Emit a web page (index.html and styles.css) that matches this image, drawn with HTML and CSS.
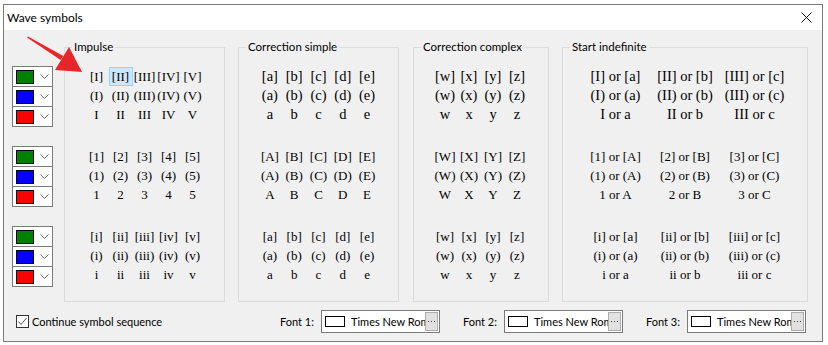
FILE: index.html
```html
<!DOCTYPE html>
<html lang="en">
<head>
    <meta charset="UTF-8">
    <title>Wave symbols</title>
    <link rel="stylesheet" href="styles.css">
</head>
<body>
    <div class="window">
        <div class="titlebar">
            <span class="title">Wave symbols</span>
            <svg class="close" width="11" height="11" viewBox="0 0 11 11">
                <path d="M0.5 0.5 L10.5 10.5 M10.5 0.5 L0.5 10.5" stroke="#111" stroke-width="1" fill="none"/>
            </svg>
        </div>

        <div class="dialog-body">
            <div class="main">
                <!-- colour pickers, one per symbol block -->
                <div class="pickers">
                    <div class="picker">
                        <div class="picker-row"><span class="swatch green"></span><svg class="chev" width="9" height="5" viewBox="0 0 9 5"><polyline points="0.5,0.5 4.5,4.5 8.5,0.5" fill="none" stroke="#6d6d6d"/></svg></div>
                        <div class="picker-row"><span class="swatch blue"></span><svg class="chev" width="9" height="5" viewBox="0 0 9 5"><polyline points="0.5,0.5 4.5,4.5 8.5,0.5" fill="none" stroke="#6d6d6d"/></svg></div>
                        <div class="picker-row"><span class="swatch red"></span><svg class="chev" width="9" height="5" viewBox="0 0 9 5"><polyline points="0.5,0.5 4.5,4.5 8.5,0.5" fill="none" stroke="#6d6d6d"/></svg></div>
                    </div>
                    <div class="picker">
                        <div class="picker-row"><span class="swatch green"></span><svg class="chev" width="9" height="5" viewBox="0 0 9 5"><polyline points="0.5,0.5 4.5,4.5 8.5,0.5" fill="none" stroke="#6d6d6d"/></svg></div>
                        <div class="picker-row"><span class="swatch blue"></span><svg class="chev" width="9" height="5" viewBox="0 0 9 5"><polyline points="0.5,0.5 4.5,4.5 8.5,0.5" fill="none" stroke="#6d6d6d"/></svg></div>
                        <div class="picker-row"><span class="swatch red"></span><svg class="chev" width="9" height="5" viewBox="0 0 9 5"><polyline points="0.5,0.5 4.5,4.5 8.5,0.5" fill="none" stroke="#6d6d6d"/></svg></div>
                    </div>
                    <div class="picker">
                        <div class="picker-row"><span class="swatch green"></span><svg class="chev" width="9" height="5" viewBox="0 0 9 5"><polyline points="0.5,0.5 4.5,4.5 8.5,0.5" fill="none" stroke="#6d6d6d"/></svg></div>
                        <div class="picker-row"><span class="swatch blue"></span><svg class="chev" width="9" height="5" viewBox="0 0 9 5"><polyline points="0.5,0.5 4.5,4.5 8.5,0.5" fill="none" stroke="#6d6d6d"/></svg></div>
                        <div class="picker-row"><span class="swatch red"></span><svg class="chev" width="9" height="5" viewBox="0 0 9 5"><polyline points="0.5,0.5 4.5,4.5 8.5,0.5" fill="none" stroke="#6d6d6d"/></svg></div>
                    </div>
                </div>

                <fieldset class="group group-impulse">
                    <legend>Impulse</legend>
                    <div class="sym-block">
                        <div class="sym-row"><span>[I]</span><span class="selected">[II]</span><span>[III]</span><span>[IV]</span><span>[V]</span></div>
                        <div class="sym-row"><span>(I)</span><span>(II)</span><span>(III)</span><span>(IV)</span><span>(V)</span></div>
                        <div class="sym-row"><span>I</span><span>II</span><span>III</span><span>IV</span><span>V</span></div>
                    </div>
                    <div class="sym-block">
                        <div class="sym-row"><span>[1]</span><span>[2]</span><span>[3]</span><span>[4]</span><span>[5]</span></div>
                        <div class="sym-row"><span>(1)</span><span>(2)</span><span>(3)</span><span>(4)</span><span>(5)</span></div>
                        <div class="sym-row"><span>1</span><span>2</span><span>3</span><span>4</span><span>5</span></div>
                    </div>
                    <div class="sym-block">
                        <div class="sym-row"><span>[i]</span><span>[ii]</span><span>[iii]</span><span>[iv]</span><span>[v]</span></div>
                        <div class="sym-row"><span>(i)</span><span>(ii)</span><span>(iii)</span><span>(iv)</span><span>(v)</span></div>
                        <div class="sym-row"><span>i</span><span>ii</span><span>iii</span><span>iv</span><span>v</span></div>
                    </div>
                </fieldset>

                <fieldset class="group group-simple">
                    <legend>Correction simple</legend>
                    <div class="sym-block big">
                        <div class="sym-row"><span>[a]</span><span>[b]</span><span>[c]</span><span>[d]</span><span>[e]</span></div>
                        <div class="sym-row"><span>(a)</span><span>(b)</span><span>(c)</span><span>(d)</span><span>(e)</span></div>
                        <div class="sym-row"><span>a</span><span>b</span><span>c</span><span>d</span><span>e</span></div>
                    </div>
                    <div class="sym-block">
                        <div class="sym-row"><span>[A]</span><span>[B]</span><span>[C]</span><span>[D]</span><span>[E]</span></div>
                        <div class="sym-row"><span>(A)</span><span>(B)</span><span>(C)</span><span>(D)</span><span>(E)</span></div>
                        <div class="sym-row"><span>A</span><span>B</span><span>C</span><span>D</span><span>E</span></div>
                    </div>
                    <div class="sym-block">
                        <div class="sym-row"><span>[a]</span><span>[b]</span><span>[c]</span><span>[d]</span><span>[e]</span></div>
                        <div class="sym-row"><span>(a)</span><span>(b)</span><span>(c)</span><span>(d)</span><span>(e)</span></div>
                        <div class="sym-row"><span>a</span><span>b</span><span>c</span><span>d</span><span>e</span></div>
                    </div>
                </fieldset>

                <fieldset class="group group-complex">
                    <legend>Correction complex</legend>
                    <div class="sym-block big">
                        <div class="sym-row"><span>[w]</span><span>[x]</span><span>[y]</span><span>[z]</span></div>
                        <div class="sym-row"><span>(w)</span><span>(x)</span><span>(y)</span><span>(z)</span></div>
                        <div class="sym-row"><span>w</span><span>x</span><span>y</span><span>z</span></div>
                    </div>
                    <div class="sym-block">
                        <div class="sym-row"><span>[W]</span><span>[X]</span><span>[Y]</span><span>[Z]</span></div>
                        <div class="sym-row"><span>(W)</span><span>(X)</span><span>(Y)</span><span>(Z)</span></div>
                        <div class="sym-row"><span>W</span><span>X</span><span>Y</span><span>Z</span></div>
                    </div>
                    <div class="sym-block">
                        <div class="sym-row"><span>[w]</span><span>[x]</span><span>[y]</span><span>[z]</span></div>
                        <div class="sym-row"><span>(w)</span><span>(x)</span><span>(y)</span><span>(z)</span></div>
                        <div class="sym-row"><span>w</span><span>x</span><span>y</span><span>z</span></div>
                    </div>
                </fieldset>

                <fieldset class="group group-start">
                    <legend>Start indefinite</legend>
                    <div class="sym-block big wide">
                        <div class="sym-row"><span>[I] or [a]</span><span>[II] or [b]</span><span>[III] or [c]</span></div>
                        <div class="sym-row"><span>(I) or (a)</span><span>(II) or (b)</span><span>(III) or (c)</span></div>
                        <div class="sym-row"><span>I or a</span><span>II or b</span><span>III or c</span></div>
                    </div>
                    <div class="sym-block wide">
                        <div class="sym-row"><span>[1] or [A]</span><span>[2] or [B]</span><span>[3] or [C]</span></div>
                        <div class="sym-row"><span>(1) or (A)</span><span>(2) or (B)</span><span>(3) or (C)</span></div>
                        <div class="sym-row"><span>1 or A</span><span>2 or B</span><span>3 or C</span></div>
                    </div>
                    <div class="sym-block wide">
                        <div class="sym-row"><span>[i] or [a]</span><span>[ii] or [b]</span><span>[iii] or [c]</span></div>
                        <div class="sym-row"><span>(i) or (a)</span><span>(ii) or (b)</span><span>(iii) or (c)</span></div>
                        <div class="sym-row"><span>i or a</span><span>ii or b</span><span>iii or c</span></div>
                    </div>
                </fieldset>
            </div>

            <div class="footer">
                <label class="check">
                    <span class="check-box">
                        <svg width="11" height="11" viewBox="0 0 11 11"><polyline points="1.5,5.5 4,8.5 9.5,2" fill="none" stroke="#555" stroke-width="1"/></svg>
                    </span>
                    Continue symbol sequence
                </label>

                <div class="fonts">
                    <div class="font-field">
                        <span class="font-label">Font 1:</span>
                        <div class="font-box">
                            <span class="font-swatch"></span>
                            <span class="font-name">Times New Roman</span>
                            <span class="dots"><svg width="7" height="1" viewBox="0 0 7 1"><rect x="0" width="1" height="1" fill="#444"/><rect x="3" width="1" height="1" fill="#444"/><rect x="6" width="1" height="1" fill="#444"/></svg></span>
                        </div>
                    </div>
                    <div class="font-field">
                        <span class="font-label">Font 2:</span>
                        <div class="font-box">
                            <span class="font-swatch"></span>
                            <span class="font-name">Times New Roman</span>
                            <span class="dots"><svg width="7" height="1" viewBox="0 0 7 1"><rect x="0" width="1" height="1" fill="#444"/><rect x="3" width="1" height="1" fill="#444"/><rect x="6" width="1" height="1" fill="#444"/></svg></span>
                        </div>
                    </div>
                    <div class="font-field">
                        <span class="font-label">Font 3:</span>
                        <div class="font-box">
                            <span class="font-swatch"></span>
                            <span class="font-name">Times New Roman</span>
                            <span class="dots"><svg width="7" height="1" viewBox="0 0 7 1"><rect x="0" width="1" height="1" fill="#444"/><rect x="3" width="1" height="1" fill="#444"/><rect x="6" width="1" height="1" fill="#444"/></svg></span>
                        </div>
                    </div>
                </div>
            </div>
        </div>

        <!-- annotation arrow drawn over the dialog -->
        <svg class="arrow" width="70" height="50" viewBox="20 30 70 50">
            <polygon points="27,37.4 28,36.6 63.3,55.9 60.7,60.1" fill="#e8262a"/>
            <polygon points="69,47 82,72 55,70" fill="#e8262a"/>
        </svg>
    </div>
</body>
</html>
```

FILE: styles.css
```css
/* Base styles */
body {
    margin: 0;
    padding: 4px 0 0 3px;
    background: #fff;
    font-family: 'Lato', 'Liberation Sans', sans-serif;
    font-size: 11px;
    color: #000;
}

.window {
    position: relative;
    width: 818px;
    border: 1px solid #7a7a7a;
    background: #f0f0f0;
}

/* Title bar */
.titlebar {
    height: 25px;
    background: #fff;
    display: flex;
    align-items: center;
    justify-content: space-between;
    padding: 0 10px 0 3px;
}

.title {
    font-size: 12px;
}

.dialog-body {
    height: 311px;
    display: flex;
    flex-direction: column;
}

.main {
    display: flex;
    padding: 9px 0 0 8px;
}

/* Colour pickers */
.pickers {
    width: 41px;
    margin: 27px 11px 0 0;
}

.picker {
    margin-bottom: 19px;
}

.picker-row {
    height: 19px;
    border: 1px solid #7a7a7a;
    background: #fff;
    display: flex;
    align-items: center;
    padding-left: 3px;
}

.picker-row + .picker-row {
    margin-top: -1px;
}

.swatch {
    width: 16px;
    height: 12px;
    border: 1px solid #000;
}

.swatch.green { background: #008000; }
.swatch.blue { background: #0000ff; }
.swatch.red { background: #ff0000; }

.chev {
    margin-left: 6px;
}

/* Group boxes */
.group {
    margin: 0 0 0 13px;
    padding: 12px 0 0;
    border: 1px solid #dcdcdc;
    height: 263px;
    box-sizing: border-box;
    min-width: 0;
}

.group-impulse { width: 161px; margin-left: 0; }
.group-simple { width: 161px; }
.group-complex { width: 136px; margin-left: 14px; }
.group-start { width: 246px; }

.group legend {
    padding: 0 2px;
    margin-left: 7px;
    font-size: 11.5px;
    line-height: 16px;
}

.sym-block {
    display: flex;
    flex-direction: column;
    align-items: center;
    margin-bottom: 23px;
    font-family: 'Liberation Serif', serif;
    font-size: 13px;
    line-height: 19px;
}

.sym-block.big {
    font-size: 14.5px;
}

.sym-row {
    display: flex;
}

.sym-row span {
    width: 24px;
    text-align: center;
    white-space: nowrap;
}

.group-simple .sym-row span {
    width: 24.3px;
}

.wide .sym-row span {
    width: 69.5px;
}

.sym-row .selected {
    background: #cce8ff;
    box-shadow: inset 0 0 0 1px #99d1ff;
}

/* Footer */
.footer {
    flex: 1;
    display: flex;
    align-items: center;
    padding: 0 16px 5px 12px;
}

.check {
    display: flex;
    align-items: center;
    white-space: nowrap;
}

.check-box {
    width: 11px;
    height: 11px;
    border: 1px solid #333;
    background: #fff;
    margin-right: 3px;
    display: flex;
}

.fonts {
    margin-left: auto;
    display: flex;
    gap: 23px;
}

.font-field {
    display: flex;
    align-items: center;
}

.font-label {
    width: 35px;
    margin-right: 6px;
    white-space: nowrap;
}

.font-box {
    width: 117px;
    height: 21px;
    border: 1px solid #7a7a7a;
    background: #fff;
    display: flex;
    align-items: center;
}

.font-swatch {
    width: 18px;
    height: 9px;
    border: 1px solid #000;
    margin: 0 6px 0 3px;
    flex-shrink: 0;
}

.font-name {
    flex: 1;
    min-width: 0;
    overflow: hidden;
    white-space: nowrap;
}

.dots {
    width: 11px;
    height: 17px;
    margin-right: 1px;
    flex-shrink: 0;
    background: #e1e1e1;
    border: 1px solid #adadad;
    display: flex;
    align-items: center;
    justify-content: center;
}

.arrow {
    position: absolute;
    left: 16px;
    top: 25px;
}
```
